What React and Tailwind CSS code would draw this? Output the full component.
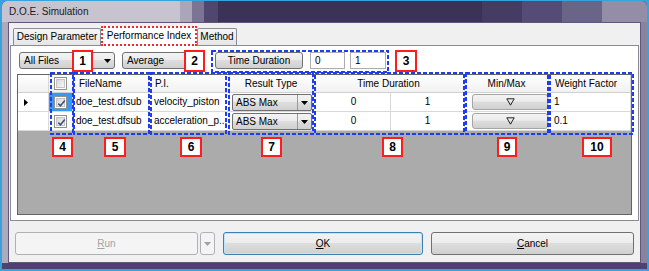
import React from "react";

function Arrow({ color = "#000" }) {
  return (
    <svg width="7" height="4" viewBox="0 0 7 4">
      <polygon points="0,0 7,0 3.5,4" fill={color} />
    </svg>
  );
}

function Check({ checked }) {
  return (
    <div className="w-[13px] h-[13px] border border-[#8e8f8f] bg-white p-[1px]">
      <div className="w-full h-full bg-[linear-gradient(135deg,#d8d8d8,#f6f6f6)] border border-[#c4c4c4] relative">
        {checked && (
          <svg className="absolute left-[-1px] top-[-1px]" width="11" height="11" viewBox="0 0 11 11">
            <path d="M2.3 5.6 L4.5 7.8 L8.8 2.6" stroke="#3d4f7e" strokeWidth="1.6" fill="none" />
          </svg>
        )}
      </div>
    </div>
  );
}

const btnGrad =
  "bg-[linear-gradient(#f3f3f3,#ececec_45%,#dddddd_50%,#d0d0d0)]";

function Combo({ label, className }) {
  return (
    <div className={`border border-[#707070] rounded-[3px] flex items-center ${btnGrad} ${className}`}>
      <span className="flex-1 pl-[4px]">{label}</span>
      <span className="w-[14px] flex justify-center">
        <Arrow />
      </span>
    </div>
  );
}

function CellCombo() {
  return (
    <div className={`h-[17px] ml-[2px] border border-[#707070] rounded-[2px] flex ${btnGrad}`}>
      <span className="flex-1 pl-[3px] flex items-center">ABS Max</span>
      <span className="w-[14px] border-l border-[#9a9a9a] flex items-center justify-center">
        <Arrow />
      </span>
    </div>
  );
}

function MinMaxBtn() {
  return (
    <div className={`h-[16px] ml-[7px] mt-[1px] border border-[#a5a5a5] rounded-[3px] flex items-center justify-center ${btnGrad}`}>
      <svg width="9" height="8" viewBox="0 0 9 8">
        <polygon points="0.8,0.8 8.2,0.8 4.5,7.2" fill="none" stroke="#222" strokeWidth="1" />
      </svg>
    </div>
  );
}

const cols = "grid grid-cols-[31px_24px_76px_81px_83px_78px_74px_84px_82px]";
const hcell = "border-r border-[#d8d8d8] flex items-center justify-center";
const cell = "border-r border-b border-[#d8d8d8] bg-white flex items-center";

function Row({ first, pi, wf }) {
  return (
    <div className={`${cols} h-[19px]`}>
      <div className={`${cell} bg-[#f7f7f7] pl-[6px]`}>
        {first && (
          <svg width="4" height="7" viewBox="0 0 4 7">
            <polygon points="0,0 4,3.5 0,7" fill="#000" />
          </svg>
        )}
      </div>
      <div className={`${cell} justify-center ${first ? "!bg-[#3399ff]" : ""}`}>
        <Check checked />
      </div>
      <div className={`${cell} pl-[3px] whitespace-nowrap`}>doe_test.dfsub</div>
      <div className={`${cell} pl-[5px] whitespace-nowrap overflow-hidden`}>{pi}</div>
      <div className={`${cell} !items-start pt-[1px]`}>
        <div className="w-full">
          <CellCombo />
        </div>
      </div>
      <div className={`${cell} justify-center pl-[4px]`}>0</div>
      <div className={`${cell} justify-center`}>1</div>
      <div className={`${cell} !items-start`}>
        <div className="w-full">
          <MinMaxBtn />
        </div>
      </div>
      <div className={`${cell} pl-[5px]`}>{wf}</div>
    </div>
  );
}

function RedBox({ n, className }) {
  return (
    <div
      className={`absolute border-2 border-[#ff1c1c] bg-white flex items-center justify-center font-bold text-[12px] text-black ${className}`}
    >
      {n}
    </div>
  );
}

export default function App() {
  return (
    <div className="relative w-[649px] h-[271px] bg-[#37a3dc] pt-[1px] px-[2px] pb-[2px] font-['Liberation_Sans',Arial,sans-serif] text-[10px] text-black">
      <div className="w-full h-full rounded-t-[5px] flex flex-col bg-[#4a4070]">
        {/* title bar */}
        <div className="relative z-20 h-[21px] flex shrink-0 bg-[#3a3257] rounded-t-[5px]">
          <div className="w-[178px] rounded-tl-[5px] bg-[#c7c3d0] flex items-center pl-[7px] text-[#1a1a1a] whitespace-nowrap">
            D.O.E. Simulation
          </div>
          <div className="w-[12px] bg-[#aaa5b9]"></div>
          <div className="w-[12px] bg-[#7b7494]"></div>
          <div className="w-[14px] bg-[#4f4770]"></div>
          <div className="flex-1 bg-[#3a3257]"></div>
          <div className="w-[40px] bg-[#443c63]"></div>
          <div className="w-[40px] bg-[#544c76]"></div>
          <div className="w-[40px] bg-[#6b6489]"></div>
          <div className="w-[45px] rounded-tr-[5px] bg-[#938da8]"></div>
        </div>
        {/* body */}
        <div className="flex-1 flex min-h-0">
          <div className="w-[6px] bg-[#aea9bd]"></div>
          <div className="flex-1 bg-[#f0f0f0] border border-[#5f587a] flex flex-col px-[1px] leading-none">
            {/* tabs */}
            <div className="h-[22px] flex items-end pl-[3px] shrink-0">
              <div className="w-[88px] h-[17px] border border-b-0 border-[#898c95] rounded-t-[2px] bg-[linear-gradient(#f4f4f4,#e6e6e6)] flex items-center justify-center whitespace-nowrap">
                Design Parameter
              </div>
              <div className="relative z-10 w-[96px] h-[20px] mb-[-1px] bg-white border-2 border-dotted border-[#ee2a2a] flex items-center justify-center whitespace-nowrap">
                Performance Index
              </div>
              <div className="w-[40px] h-[17px] border border-b-0 border-[#898c95] rounded-t-[2px] bg-[linear-gradient(#f4f4f4,#e6e6e6)] flex items-center justify-center">
                Method
              </div>
            </div>
            {/* panel */}
            <div className="h-[176px] shrink-0 bg-white border border-[#898c95] flex flex-col pt-[6px]">
              <div className="h-[17px] flex pl-[8px]">
                <Combo label="All Files" className="w-[96px]" />
                <Combo label="Average" className="w-[83px] ml-[7px]" />
                <div className={`w-[88px] ml-[10px] border border-[#707070] rounded-[3px] flex items-center justify-center ${btnGrad}`}>
                  Time Duration
                </div>
                <div className="w-[35px] ml-[7px] border border-[#abadb3] bg-white flex items-center pl-[4px]">0</div>
                <div className="w-[36px] ml-[5px] border border-[#abadb3] bg-white flex items-center pl-[4px]">1</div>
              </div>
              <div className="mt-[5px] ml-[6px] w-[615px] h-[141px] border border-[#646464] bg-[#ababab] flex flex-col">
                <div className={`${cols} h-[18px] bg-[linear-gradient(#ffffff,#f1f1f1)] border-b border-[#d0d0d0]`}>
                  <div className={hcell}></div>
                  <div className={hcell}>
                    <Check />
                  </div>
                  <div className={`${hcell} !justify-start pl-[6px]`}>FileName</div>
                  <div className={`${hcell} !justify-start pl-[6px]`}>P.I.</div>
                  <div className={hcell}>Result Type</div>
                  <div className={`${hcell} col-span-2`}>Time Duration</div>
                  <div className={hcell}>Min/Max</div>
                  <div className={`${hcell} !justify-start pl-[6px]`}>Weight Factor</div>
                </div>
                <Row first pi="velocity_piston" wf="1" />
                <Row pi="acceleration_p..." wf="0.1" />
              </div>
            </div>
            {/* buttons */}
            <div className="mt-[11px] h-[23px] shrink-0 flex pl-[5px]">
              <div className="w-[183px] border border-[#adb2b5] rounded-[3px] bg-[#f4f4f4] flex items-center justify-center text-[#a3a3a3]">
                <span>
                  <span className="underline">R</span>un
                </span>
              </div>
              <div className="w-[15px] ml-[2px] border border-[#adb2b5] rounded-[3px] bg-[#f4f4f4] flex items-center justify-center">
                <Arrow color="#a0a0a0" />
              </div>
              <div className={`w-[200px] ml-[8px] border border-[#3c7fb1] rounded-[3px] flex items-center justify-center shadow-[inset_0_0_0_1px_#bfe6f8] ${btnGrad}`}>
                <span>
                  <span className="underline">O</span>K
                </span>
              </div>
              <div className={`w-[203px] ml-[8px] border border-[#707070] rounded-[3px] flex items-center justify-center ${btnGrad}`}>
                <span>
                  <span className="underline">C</span>ancel
                </span>
              </div>
            </div>
          </div>
          <div className="w-[6px] bg-[#8a83a0]"></div>
        </div>
        <div className="h-[6px] shrink-0 bg-[#4d4272]"></div>
      </div>

      {/* annotation overlays */}
      <svg className="absolute left-0 top-0 pointer-events-none" width="649" height="271">
        <g fill="none" stroke="#1f3cf5" strokeWidth="2" strokeDasharray="4 2">
          <rect x="212" y="51" width="176" height="21" />
          <rect x="51" y="73" width="22" height="61" />
          <rect x="74" y="73" width="75" height="61" />
          <rect x="151" y="73" width="75" height="61" />
          <rect x="229" y="73" width="84" height="61" />
          <rect x="315" y="73" width="149" height="61" />
          <rect x="466" y="73" width="82" height="61" />
          <rect x="550" y="73" width="83" height="61" />
        </g>
      </svg>
      <RedBox n="1" className="left-[72px] top-[50px] w-[21px] h-[22px]" />
      <RedBox n="2" className="left-[184px] top-[50px] w-[21px] h-[22px]" />
      <RedBox n="3" className="left-[395px] top-[50px] w-[22px] h-[22px]" />
      <RedBox n="4" className="left-[52px] top-[137px] w-[21px] h-[20px]" />
      <RedBox n="5" className="left-[104px] top-[137px] w-[22px] h-[20px]" />
      <RedBox n="6" className="left-[180px] top-[137px] w-[22px] h-[20px]" />
      <RedBox n="7" className="left-[261px] top-[137px] w-[21px] h-[20px]" />
      <RedBox n="8" className="left-[382px] top-[137px] w-[21px] h-[20px]" />
      <RedBox n="9" className="left-[497px] top-[137px] w-[20px] h-[20px]" />
      <RedBox n="10" className="left-[582px] top-[137px] w-[30px] h-[20px]" />
    </div>
  );
}
